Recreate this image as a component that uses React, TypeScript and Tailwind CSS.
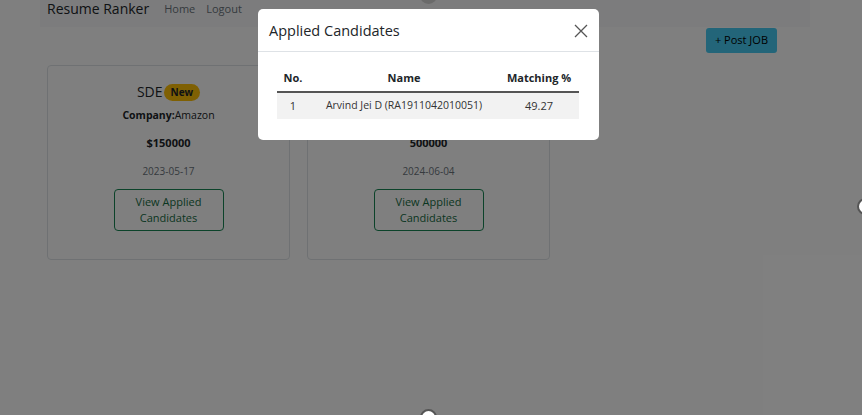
import React from "react";

const font = { fontFamily: '"Open Sans", "Noto Sans", sans-serif' };

type Job = { title?: string; isNew?: boolean; company?: string; salary: string; date: string };

// second job's title/company sit under the modal in the screenshot
const jobs: Job[] = [
  { title: "SDE", isNew: true, company: "Amazon", salary: "$150000", date: "2023-05-17" },
  { salary: "500000", date: "2024-06-04" },
];

const JobCard = ({ job }: { job: Job }) => (
  <div className="w-[243px] h-[195px] border border-[#dee2e6] rounded-[4px] bg-white flex flex-col items-center pt-[17px]">
    <div className="flex items-center h-[18px]">
      <span className="text-[14px] text-[#212529] leading-[18px]">{job.title}</span>
      {job.isNew && (
        <span className="ml-[1px] h-[17px] px-[7px] rounded-full bg-[#ffc107] text-[10px] font-bold text-[#212529] flex items-center">
          New
        </span>
      )}
    </div>
    <p className="mt-[6px] h-[16px] text-[10.5px] leading-[16px] text-[#212529]">
      {job.company && (
        <>
          <b>Company:</b>
          {job.company}
        </>
      )}
    </p>
    <p className="mt-[12px] text-[11px] leading-[16px] font-bold text-[#212529]">{job.salary}</p>
    <p className="mt-[13px] text-[10px] leading-[14px] text-[#6c757d]">{job.date}</p>
    <button className="mt-[11px] w-[110px] h-[42px] border border-[#198754] rounded-[4px] text-[11px] leading-[16px] text-[#146c43]">
      View Applied
      <br />
      Candidates
    </button>
  </div>
);

export default function App() {
  return (
    <div className="relative w-[862px] h-[415px] overflow-hidden bg-white" style={font}>
      <div className="mx-[40px] w-[770px]">
        <nav className="h-[27px] bg-[#f8f9fa] flex items-start px-[7px]">
          <span className="text-[14px] font-medium text-[#212529] leading-[18px]">Resume Ranker</span>
          <span className="ml-[15px] text-[11px] text-[#6c757d] leading-[18px]">Home</span>
          <span className="ml-[11px] text-[11px] text-[#6c757d] leading-[18px]">Logout</span>
        </nav>
        <div className="flex justify-end pr-[33px] mt-[1px]">
          <button className="h-[25px] px-[9px] rounded-[3px] bg-[#46cbf2] text-[11px] text-black">+ Post JOB</button>
        </div>
        <div className="flex gap-[17px] px-[7px] mt-[12px]">
          {jobs.map((j) => (
            <JobCard key={j.date} job={j} />
          ))}
        </div>
      </div>

      <div className="absolute inset-0 bg-black/50" />

      <div className="absolute left-[258px] top-[9px] w-[341px] h-[131px] bg-white rounded-[5px]">
        <div className="h-[43px] border-b border-[#dee2e6] flex items-center justify-between pl-[11px] pr-[11px]">
          <h5 className="text-[14.5px] text-[#212529] mt-[1px]">Applied Candidates</h5>
          <svg width="14" height="14" viewBox="0 0 14 14" className="mt-[1px]">
            <path d="M1 1 L13 13 M13 1 L1 13" stroke="#555" strokeWidth="1.3" />
          </svg>
        </div>
        <div className="px-[19px] pt-[13px]">
          <table className="w-[302px] text-[11px] text-[#212529]">
            <thead>
              <tr className="h-[27px] border-b-[2px] border-[#555]">
                <th className="w-[32px] font-bold">No.</th>
                <th className="font-bold">Name</th>
                <th className="w-[80px] font-bold">Matching %</th>
              </tr>
            </thead>
            <tbody>
              <tr className="h-[27px] bg-[#f2f2f2] text-[#333]">
                <td className="text-center">1</td>
                <td className="text-center text-[10.5px]">Arvind Jei D (RA1911042010051)</td>
                <td className="text-center">49.27</td>
              </tr>
            </tbody>
          </table>
        </div>
      </div>

      <div className="absolute left-[420px] top-[-13px] w-[17px] h-[17px] rounded-full bg-[#6a6a6a]" />
      <div className="absolute left-[420px] top-[409px] w-[17px] h-[17px] rounded-full bg-white border-[2px] border-[#555]" />
      <div className="absolute left-[857px] top-[198px] w-[17px] h-[17px] rounded-full bg-white border-[2px] border-[#555]" />
    </div>
  );
}
